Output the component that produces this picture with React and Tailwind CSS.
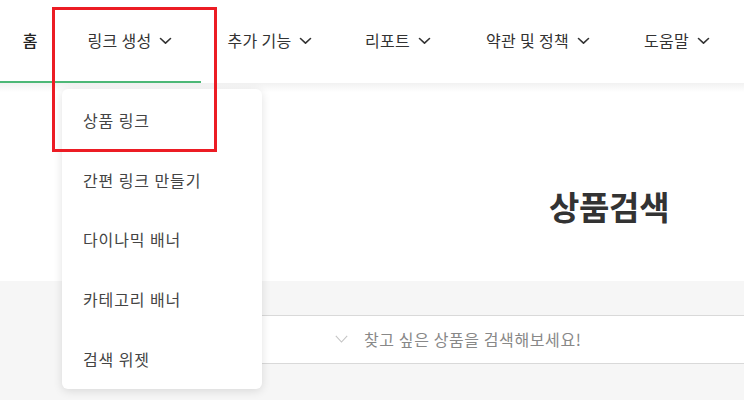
import React from "react";

const Chevron = ({ className = "" }) => (
  <svg width="13" height="8" viewBox="0 0 13 8" className={className} fill="none">
    <polyline points="1.5,1.5 6.5,6.2 11.5,1.5" stroke="currentColor" strokeWidth="1.6" strokeLinecap="round" strokeLinejoin="round" />
  </svg>
);

const navItems = [
  { label: "링크 생성", w: "w-[140px]" },
  { label: "추가 기능", w: "w-[140px]" },
  { label: "리포트", w: "w-[116px]" },
  { label: "약관 및 정책", w: "w-[164px]" },
  { label: "도움말", w: "w-[114px]" },
];

const menu = ["상품 링크", "간편 링크 만들기", "다이나믹 배너", "카테고리 배너", "검색 위젯"];

export default function App() {
  return (
    <div
      className="relative w-[748px] h-[408px] overflow-hidden bg-white text-[#333]"
      style={{ fontFamily: '"Noto Sans CJK KR", "Noto Sans", sans-serif' }}
    >
      <div className="w-[744px]">
        {/* Header */}
        <header className="relative h-[83px] bg-white flex items-center">
          <nav className="flex items-center h-full">
            <div className="w-[60px] flex justify-center items-center h-full">
              <span className="text-[16px] font-medium text-[#222] -mt-[4px]">홈</span>
            </div>
            {navItems.map((it) => (
              <div key={it.label} className={`${it.w} flex justify-center items-center h-full`}>
                <div className="flex items-center gap-[8px] -mt-[4px] text-[#333]">
                  <span className="text-[16px] tracking-[0.3px]">{it.label}</span>
                  <Chevron className="mt-[2px]" />
                </div>
              </div>
            ))}
          </nav>
          <div className="absolute left-0 bottom-0 w-[201px] h-[2px] bg-[#4db877]" />
        </header>

        {/* Title area */}
        <section className="h-[198px] bg-gradient-to-b from-[#f1f1f1] via-white to-white bg-[length:100%_18px] bg-no-repeat">
          <div className="pt-[103px] pl-[549px]">
            <h1 className="text-[33px] leading-[40px] font-bold text-[#333] tracking-[-0.3px]">상품검색</h1>
          </div>
        </section>

        {/* Search band */}
        <section className="h-[119px] bg-[#f6f6f6] pt-[34px]">
          <div className="ml-[120px] h-[49px] bg-white border-y border-[#d9d9d9] flex items-center">
            <div className="pl-[215px] flex items-center gap-[16px]">
              <svg width="13" height="8" viewBox="0 0 13 8" fill="none" className="mt-[-2px]">
                <polyline points="0.8,0.8 6.5,7 12.2,0.8" stroke="#c4c4c4" strokeWidth="1.1" />
              </svg>
              <span className="text-[16px] tracking-[0.6px] text-[#888] -mt-[2px]">찾고 싶은 상품을 검색해보세요!</span>
            </div>
          </div>
        </section>
      </div>

      {/* Dropdown menu */}
      <div className="absolute left-[62px] top-[89px] w-[200px] h-[300px] bg-white rounded-[6px] shadow-[0_2px_10px_rgba(0,0,0,0.12)] flex flex-col pt-[1px]">
        {menu.map((m) => (
          <div key={m} className="h-[60px] flex items-center pl-[21px]">
            <span className="text-[16px] tracking-[0.9px] text-[#444]">{m}</span>
          </div>
        ))}
      </div>

      {/* Red annotation box */}
      <div className="absolute left-[52px] top-[7px] w-[165px] h-[145px] border-[3px] border-[#ec1c24]" />
    </div>
  );
}
